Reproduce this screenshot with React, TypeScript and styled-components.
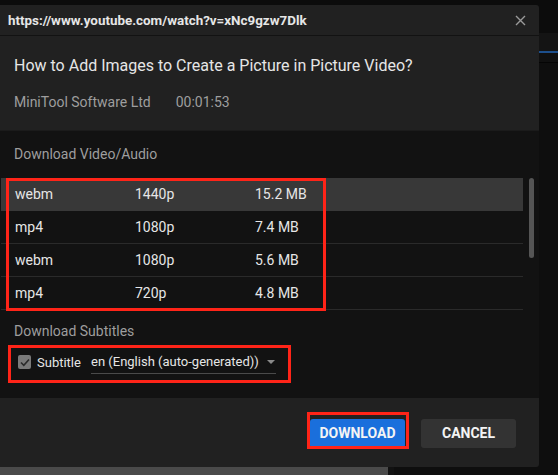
import * as React from "react";
import styled, { createGlobalStyle } from "styled-components";

const colors = {
  page: "#0e0e0e",
  panel: "#212121",
  body: "#121212",
  text: "#e6e6e6",
  muted: "#9e9e9e",
  mark: "#ff2418",
  blue: "#1a6fdc",
};

const formats = [
  { ext: "webm", res: "1440p", size: "15.2 MB" },
  { ext: "mp4", res: "1080p", size: "7.4 MB" },
  { ext: "webm", res: "1080p", size: "5.6 MB" },
  { ext: "mp4", res: "720p", size: "4.8 MB" },
];

const GlobalStyle = createGlobalStyle`
  html, body {
    margin: 0;
    padding: 0;
    background: ${colors.page};
  }
  body {
    font-family: Roboto, "Liberation Sans", Arial, sans-serif;
    -webkit-font-smoothing: antialiased;
  }
`;

const Stage = styled.div`
  position: relative;
  width: 558px;
  height: 475px;
  overflow: hidden;
  background: ${colors.page};
  display: flex;
  flex-direction: column;
`;

const AppTop = styled.div`
  height: 33px;
  background: #0c0c0c;
`;

const AppTabs = styled.div`
  height: 18px;
  background: #141414;
  border-bottom: 2px solid #1d4f8c;
`;

const AppTabsRest = styled.div`
  height: 9px;
  background: #101010;
  border-bottom: 1px solid #050505;
`;

const AppMain = styled.div`
  flex: 1;
`;

const AppFooter = styled.div`
  height: 8px;
  display: flex;
`;

const AppFooterSeek = styled.div`
  width: 388px;
  background: #4a4a4a;
  border-right: 6px solid #121212;
`;

const Dialog = styled.div`
  position: absolute;
  left: 0;
  top: 5px;
  width: 539px;
  height: 462px;
  background: ${colors.panel};
  border-radius: 0 3px 3px 0;
  display: flex;
  flex-direction: column;
  overflow: hidden;
`;

const Header = styled.div`
  height: 30px;
  display: flex;
  align-items: center;
  justify-content: space-between;
  padding: 0 12px 0 8px;
  border-bottom: 1px solid #121212;
`;

const Url = styled.div`
  color: ${colors.text};
  font-size: 13.4px;
  font-weight: 700;
`;

const Close = styled.button`
  border: 0;
  background: none;
  padding: 0;
  width: 14px;
  height: 14px;
  display: flex;
  align-items: center;
  justify-content: center;
  color: #9a9a9a;
`;

const Info = styled.div`
  height: 94px;
  padding: 20px 14px 0;
  box-sizing: border-box;
  display: flex;
  flex-direction: column;
  gap: 17px;
`;

const Title = styled.div`
  color: ${colors.text};
  font-size: 16px;
  line-height: 20px;
`;

const Meta = styled.div`
  display: flex;
  gap: 25px;
  color: ${colors.muted};
  font-size: 14px;
  line-height: 18px;
`;

const Body = styled.div`
  height: 268px;
  background: ${colors.body};
  border-top: 1px solid #1b1b1b;
  box-sizing: border-box;
  padding-top: 14px;
  display: flex;
  flex-direction: column;
`;

const SectionLabel = styled.div<{ $gap: number }>`
  color: ${colors.muted};
  font-size: 14px;
  line-height: 18px;
  padding-left: 14px;
  margin-bottom: ${(p) => p.$gap}px;
`;

const TableArea = styled.div`
  position: relative;
  display: flex;
  gap: 6px;
  padding-left: 1px;
  margin-bottom: 12px;
`;

const Table = styled.div`
  width: 522px;
`;

const Row = styled.div<{ $active?: boolean }>`
  height: 32px;
  display: flex;
  align-items: center;
  padding-left: 14px;
  background: ${(p) => (p.$active ? "#383838" : "transparent")};
  border-bottom: 1px solid ${(p) => (p.$active ? "#383838" : "#2a2a2a")};
  color: ${colors.text};
  font-size: 14px;
`;

const Cell = styled.div`
  width: 120px;
`;

const Scrollbar = styled.div`
  width: 5px;
  height: 80px;
  border-radius: 3px;
  background: #555;
`;

const Marker = styled.div`
  position: absolute;
  border: 3px solid ${colors.mark};
  box-sizing: border-box;
  pointer-events: none;
`;

const TableMarker = styled(Marker)`
  left: 6px;
  top: 0;
  width: 320px;
  height: 133px;
`;

const SubtitleRow = styled.div`
  margin-left: 8px;
  width: 283px;
  height: 38px;
  box-sizing: border-box;
  border: 3px solid ${colors.mark};
  padding: 0 0 4px 7px;
  display: flex;
  align-items: center;
  color: ${colors.text};
  font-size: 13px;
  white-space: nowrap;
`;

const Check = styled.span`
  width: 13px;
  height: 14px;
  border-radius: 2px;
  background: #7a7a7a;
  display: flex;
  align-items: center;
  justify-content: center;
  margin-right: 6px;
`;

const CheckLabel = styled.span`
  width: 54px;
`;

const Select = styled.div`
  width: 185px;
  height: 24px;
  display: flex;
  align-items: center;
  justify-content: space-between;
  border-bottom: 1px solid #4a4a4a;
  padding-right: 1px;
  box-sizing: border-box;
`;

const Caret = styled.span`
  width: 0;
  height: 0;
  border-left: 4px solid transparent;
  border-right: 4px solid transparent;
  border-top: 4px solid #8a8a8a;
`;

const Footer = styled.div`
  flex: 1;
  display: flex;
  justify-content: flex-end;
  align-items: center;
  gap: 16px;
  padding: 1px 23px 0 0;
`;

const ButtonWrap = styled.div`
  position: relative;
  display: flex;
`;

const DownloadMarker = styled(Marker)`
  left: -3px;
  right: -4px;
  top: -7px;
  bottom: -1px;
`;

const Button = styled.button<{ $primary?: boolean }>`
  width: 95px;
  height: 29px;
  border: 0;
  border-radius: 3px;
  background: ${(p) => (p.$primary ? colors.blue : "#333333")};
  color: #f4f4f4;
  font-family: Roboto, "Liberation Sans", Arial, sans-serif;
  font-size: 14px;
  font-weight: 700;
  text-transform: uppercase;
`;

const App = () => {
  return (
    <>
      <GlobalStyle />
      <Stage>
        <AppTop />
        <AppTabs />
        <AppTabsRest />
        <AppMain />
        <AppFooter>
          <AppFooterSeek />
        </AppFooter>

        <Dialog>
          <Header>
            <Url>https://www.youtube.com/watch?v=xNc9gzw7Dlk</Url>
            <Close>
              <svg width="11" height="11" viewBox="0 0 11 11">
                <path d="M1 1L10 10M10 1L1 10" stroke="currentColor" strokeWidth="1.4" />
              </svg>
            </Close>
          </Header>

          <Info>
            <Title>How to Add Images to Create a Picture in Picture Video?</Title>
            <Meta>
              <span>MiniTool Software Ltd</span>
              <span>00:01:53</span>
            </Meta>
          </Info>

          <Body>
            <SectionLabel $gap={15}>Download Video/Audio</SectionLabel>
            <TableArea>
              <Table>
                {formats.map((f, i) => (
                  <Row key={i} $active={i === 0}>
                    <Cell>{f.ext}</Cell>
                    <Cell>{f.res}</Cell>
                    <Cell>{f.size}</Cell>
                  </Row>
                ))}
              </Table>
              <Scrollbar />
              <TableMarker />
            </TableArea>

            <SectionLabel $gap={5}>Download Subtitles</SectionLabel>
            <SubtitleRow>
              <Check>
                <svg width="10" height="9" viewBox="0 0 10 9">
                  <path d="M1 4.5L3.8 7.3L9 1.5" stroke="#2a2a2a" strokeWidth="1.6" fill="none" />
                </svg>
              </Check>
              <CheckLabel>Subtitle</CheckLabel>
              <Select>
                <span>en (English (auto-generated))</span>
                <Caret />
              </Select>
            </SubtitleRow>
          </Body>

          <Footer>
            <ButtonWrap>
              <Button $primary>Download</Button>
              <DownloadMarker />
            </ButtonWrap>
            <Button>Cancel</Button>
          </Footer>
        </Dialog>
      </Stage>
    </>
  );
};

export default App;
